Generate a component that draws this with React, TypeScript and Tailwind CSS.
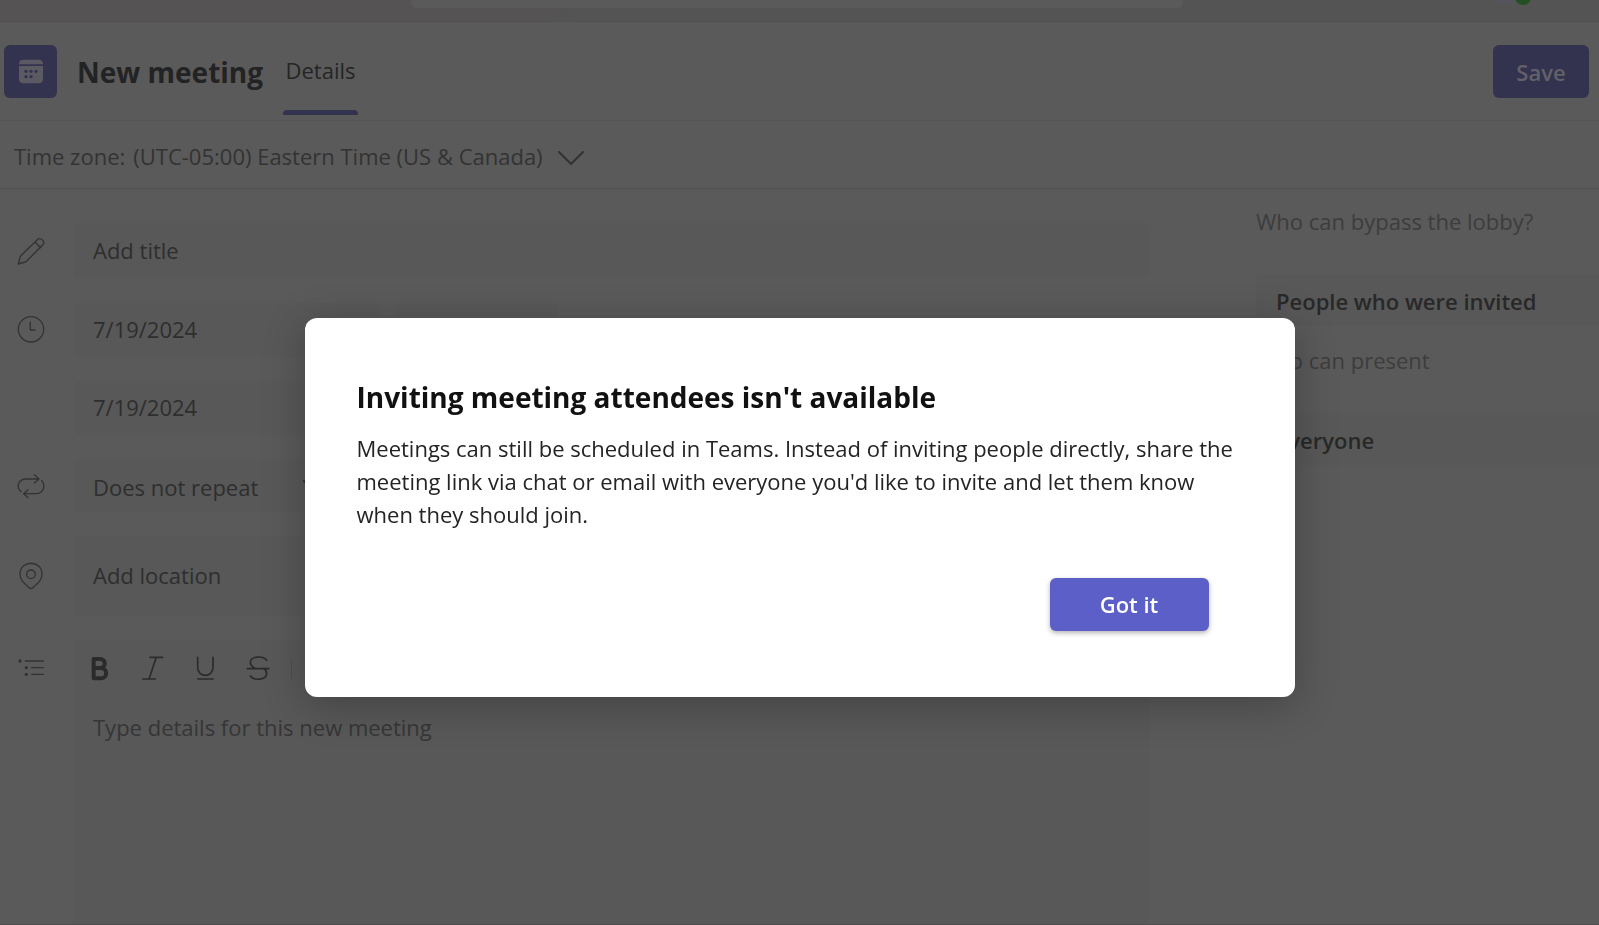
import { useState } from 'react';
import type { ReactNode } from 'react';

const stroke = { fill: 'none', stroke: 'currentColor', strokeWidth: 4, strokeLinecap: 'round', strokeLinejoin: 'round' } as const;

function Icon({ children }: { children: ReactNode }) {
  return (
    <svg viewBox="0 0 90 90" className="block h-[30px] w-[30px]" aria-hidden="true" {...stroke}>
      {children}
    </svg>
  );
}

function Chevron() {
  return (
    <svg viewBox="0 0 26 16" className="pointer-events-none h-4 w-[26px]" fill="none" stroke="currentColor" strokeWidth="2" strokeLinecap="round" strokeLinejoin="round" aria-hidden="true">
      <path d="M1 3l12 12L25 3" />
    </svg>
  );
}

function CalendarIcon() {
  return (
    <svg viewBox="0 0 72 84" className="h-7 w-6" aria-hidden="true">
      <path fill="#5b5a63" d="M0 22C0 10 7 8 15 8h42c8 0 15 2 15 14z" />
      <path fill="#5b5a63" d="M0 27h72v39c0 8-5 13-13 13H13C5 79 0 74 0 66z" />
      <g fill="#33334f">
        <circle cx="21" cy="43" r="5" />
        <circle cx="36" cy="43" r="5" />
        <circle cx="51" cy="43" r="5" />
        <circle cx="21" cy="59" r="5" />
        <circle cx="36" cy="59" r="5" />
      </g>
    </svg>
  );
}

function Row({ icon, children }: { icon?: ReactNode; children: ReactNode }) {
  return (
    <div className="flex items-center">
      <div className="flex w-[73px] shrink-0 pl-4 text-[#333333]">{icon}</div>
      <div className="flex min-w-0 flex-1 gap-[14px]">{children}</div>
    </div>
  );
}

const field = 'rounded-md bg-[#585858] px-5 text-[22px] text-[#2e2e2e] outline-none placeholder:text-[#2e2e2e] placeholder:opacity-100';

const tools = [
  {
    name: 'Bold',
    drawing: <path strokeWidth="12" d="M26 15h19c19 0 19 27 0 27H26zM26 42h21c22 0 22 31 0 31H26z" />,
  },
  { name: 'Italic', drawing: <path strokeWidth="5" d="M36 10h38M14 75h38M55 10L33 75" /> },
  { name: 'Underline', drawing: <path strokeWidth="5" d="M20 10v30c0 32 46 32 46 0V10M20 75h46" /> },
  {
    name: 'Strikethrough',
    drawing: <path strokeWidth="5" d="M68 19C59 5 19 5 19 25c0 8 4 12 11 16M10 44h64M19 66c10 15 49 12 49-7 0-7-3-11-8-15" />,
  },
];

function MeetingForm() {
  return (
    <form className="flex min-w-0 flex-1 flex-col gap-6 pt-[34px]">
      <Row
        icon={
          <Icon>
            <path d="M7 84l5-20q1-3 4-6L64 11c10-9 26 6 16 16L33 74q-3 3-6 4zM57 18l17 17" />
          </Icon>
        }
      >
        <input aria-label="Title" placeholder="Add title" className={`${field} h-14 min-w-0 flex-1 pb-[2px]`} />
      </Row>
      <Row
        icon={
          <Icon>
            <circle cx="45" cy="43" r="38" />
            <path d="M43 21v24h14" />
          </Icon>
        }
      >
        <input aria-label="Start date" defaultValue="7/19/2024" className={`${field} h-[54px] w-[308px] pb-[2px]`} />
        <input aria-label="Start time" className={`${field} h-[54px] w-[163px] pb-[2px]`} />
      </Row>
      <Row>
        <input aria-label="End date" defaultValue="7/19/2024" className={`${field} h-[54px] w-[308px] pb-[2px]`} />
        <input aria-label="End time" className={`${field} h-[54px] w-[163px] pb-[2px]`} />
      </Row>
      <Row
        icon={
          <Icon>
            <path d="M68 24H31C8 24-2 48 15 62M55 11l14 13-14 12M24 68h37c20 0 30-24 16-39M36 56L23 68l13 12" />
          </Icon>
        }
      >
        <div className="grid w-[280px] items-center text-[#2e2e2e]">
          <select aria-label="Repeat" className={`${field} col-start-1 row-start-1 h-[53px] w-full appearance-none pt-1`}>
            <option>Does not repeat</option>
          </select>
          <div className="col-start-1 row-start-1 justify-self-end pr-6">
            <Chevron />
          </div>
        </div>
      </Row>
      <Row
        icon={
          <Icon>
            <path d="M45 83c-3 0-5-2-7-4C23 66 12 56 12 39c0-43 66-43 66 0 0 17-11 27-26 40-2 2-4 4-7 4z" />
            <circle cx="45" cy="40" r="13" />
          </Icon>
        }
      >
        <input aria-label="Location" placeholder="Add location" className={`${field} h-20 min-w-0 flex-1 pb-[2px]`} />
      </Row>
      <div className="flex flex-1">
        <div className="w-[73px] shrink-0 pt-[13px] pl-4 text-[#333333]">
          <Icon>
            <path d="M28 24h54M47 44h35M47 64h35" />
            <g fill="currentColor" stroke="none">
              <circle cx="12" cy="24" r="5" />
              <circle cx="31" cy="44" r="5" />
              <circle cx="31" cy="64" r="5" />
            </g>
          </Icon>
        </div>
        <div className="flex min-w-0 flex-1 flex-col rounded-t-md bg-[#585858]">
          <div className="flex h-[58px] items-center text-[#2b2b2b]">
            {tools.map((tool) => (
              <button key={tool.name} type="button" aria-label={tool.name} className="flex h-12 w-[53px] items-center justify-center">
                <Icon>{tool.drawing}</Icon>
              </button>
            ))}
            <div className="ml-[6px] h-5 w-px bg-[#4d4d4d]" />
          </div>
          <textarea
            aria-label="Details"
            placeholder="Type details for this new meeting"
            className="w-full flex-1 resize-none bg-transparent px-5 pt-[13px] text-[22px] leading-[33px] outline-none placeholder:text-[#363636] placeholder:opacity-100"
          />
        </div>
      </div>
    </form>
  );
}

function Option({ id, label, value }: { id: string; label: string; value: string }) {
  return (
    <div>
      <label htmlFor={id} className="block leading-[33px] text-[#3d3d3d]">
        {label}
      </label>
      <select id={id} className="mt-9 h-[52px] w-full appearance-none rounded-l-md bg-[#585858] px-5 pt-[2px] font-semibold text-[#282828]">
        <option>{value}</option>
      </select>
    </div>
  );
}

function InviteDialog({ onClose }: { onClose: () => void }) {
  return (
    <div className="fixed inset-0 flex items-center justify-center pt-[90px]">
      <div role="dialog" aria-modal="true" aria-labelledby="dialog-title" className="w-full max-w-[990px] rounded-xl bg-white px-[52px] pt-[59px] pb-[66px] shadow-[0_8px_40px_rgba(0,0,0,0.25)]">
        <h2 id="dialog-title" className="text-[28px] leading-10 font-bold text-[#111111]">
          Inviting meeting attendees isn't available
        </h2>
        <p className="mt-[15px] text-[22px] leading-[33px] text-[#242424]">
          Meetings can still be scheduled in Teams. Instead of inviting people directly, share the meeting link via chat or email with everyone you'd like to invite and let them know when they should join.
        </p>
        <div className="mt-[47px] flex justify-end pr-[34px]">
          <button type="button" onClick={onClose} className="h-[53px] w-[159px] rounded-md bg-[#5b5fc7] text-[22px] font-semibold text-white shadow-[0_2px_5px_rgba(0,0,0,0.3)]">
            Got it
          </button>
        </div>
      </div>
    </div>
  );
}

export default function App() {
  const [open, setOpen] = useState(true);

  return (
    <div className="flex min-h-screen flex-col overflow-hidden border-b border-[#4f4f4f] bg-[#5a5a5a] font-['Open_Sans',sans-serif] text-[22px]">
      <div className="flex h-[22px] items-start border-b border-[#505050] bg-linear-to-r from-[#565354] from-33% to-[#545454] to-36%">
        <div className="ml-[411px] h-2 w-[772px] rounded-b-md bg-[#5a5a5a]" />
        <div className="ml-auto flex pr-[68px]">
          <div className="h-1 w-[21px] rounded-bl-full bg-[#53555b]" />
          <div className="h-[5px] w-4 overflow-hidden">
            <div className="-mt-[11px] h-4 w-4 rounded-full bg-[#235023]" />
          </div>
        </div>
      </div>
      <header className="flex h-[99px] items-center border-b border-[#545454] pr-[10px] pl-1">
        <div className="flex h-[53px] w-[53px] items-center justify-center rounded-md bg-[#33334f]">
          <CalendarIcon />
        </div>
        <h1 className="ml-5 pt-[2px] text-[28px] font-bold text-[#232323]">New meeting</h1>
        <button type="button" className="ml-[18px] flex h-full flex-col items-center justify-end px-[2px] pb-[5px] text-[#252525]">
          <span className="mb-[23px] leading-[33px]">Details</span>
          <span className="h-[5px] w-[75px] rounded-t bg-[#33334f]" />
        </button>
        <button type="button" className="ml-auto h-[53px] w-24 rounded-md bg-[#33334f] pt-[2px] font-semibold text-[#626169]">
          Save
        </button>
      </header>
      <div className="flex h-[68px] items-center gap-[15px] border-b border-[#505050] pt-1 pl-[14px] text-[#333333]">
        <label className="flex gap-2">
          <span>Time zone:</span>
          <select className="appearance-none bg-transparent">
            <option>(UTC-05:00) Eastern Time (US &amp; Canada)</option>
          </select>
        </label>
        <Chevron />
      </div>
      <main className="flex flex-1 gap-[107px]">
        <MeetingForm />
        <aside className="flex w-[343px] shrink-0 flex-col gap-[18px] pt-4">
          <Option id="lobby" label="Who can bypass the lobby?" value="People who were invited" />
          <Option id="present" label="Who can present" value="Everyone" />
        </aside>
      </main>
      {open && <InviteDialog onClose={() => setOpen(false)} />}
    </div>
  );
}
